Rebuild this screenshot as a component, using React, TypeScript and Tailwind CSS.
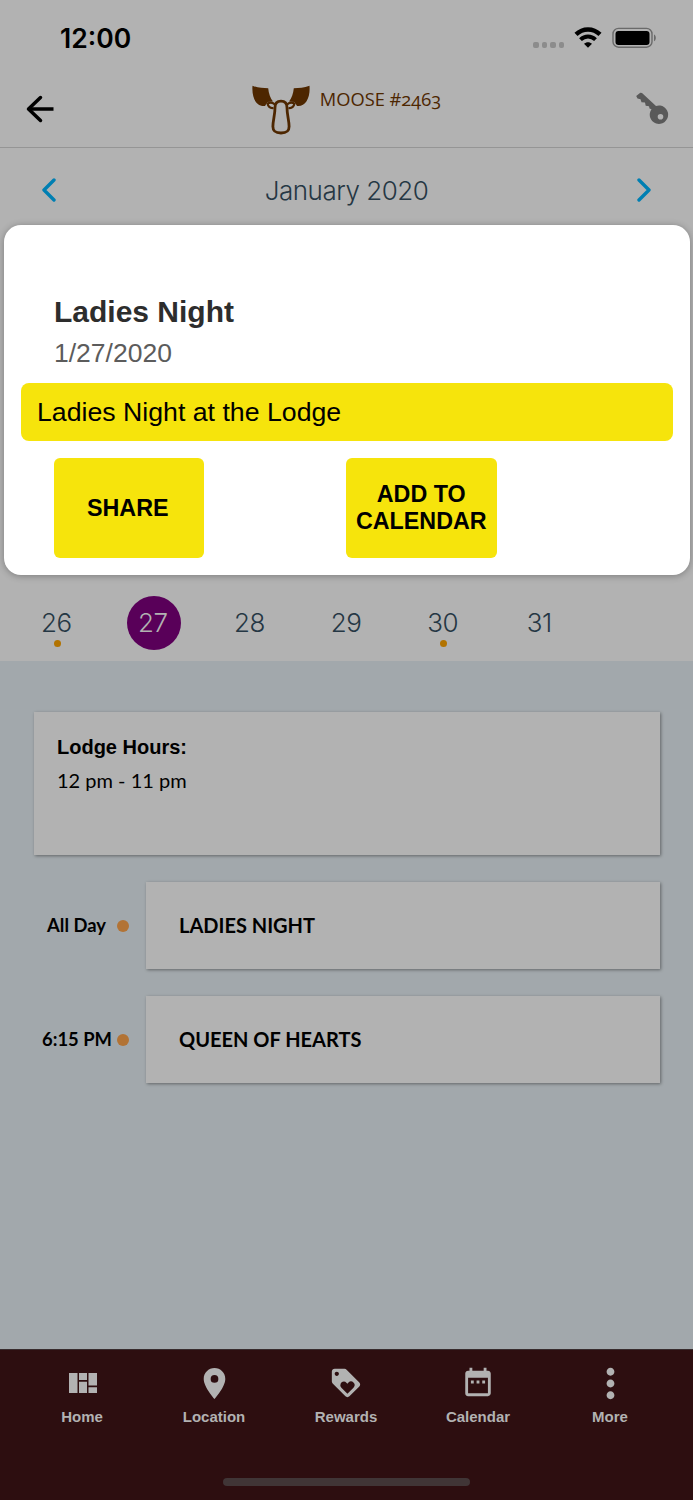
import React from 'react';
import { MdDateRange, MdLoyalty, MdMoreVert, MdPlace } from 'react-icons/md';

const days = [
  { day: 26, dot: true },
  { day: 27, selected: true },
  { day: 28 },
  { day: 29 },
  { day: 30, dot: true },
  { day: 31 },
];

const events = [
  { time: 'All Day', title: 'LADIES NIGHT', timeClass: 'pr-[6px]' },
  { time: '6:15 PM', title: 'QUEEN OF HEARTS', timeClass: '' },
];

const HomeIcon = () => (
  <svg width="28" height="20" viewBox="0 0 28 20" fill="currentColor">
    <path d="M0 0h8.5v20H0zM10 0h8v7h-8zM10 8.7h8V20h-8zM19.5 0H28v12.5h-8.5zM19.5 14.3H28V20h-8.5z" />
  </svg>
);

const tabs = [
  { label: 'Home', icon: <HomeIcon />, iconClass: 'pb-px pl-px' },
  { label: 'Location', icon: <MdPlace size={37} />, iconClass: '' },
  { label: 'Rewards', icon: <MdLoyalty size={34} />, iconClass: 'pb-px' },
  { label: 'Calendar', icon: <MdDateRange size={34} />, iconClass: 'pb-1' },
  { label: 'More', icon: <MdMoreVert size={47} />, iconClass: '' },
];

const StatusBar = () => (
  <div className="flex h-[76px] items-start justify-between pl-[60px] pr-[36px]">
    <span className="mt-[21px] font-['Inter',sans-serif] text-[26.500px] leading-[34px] font-semibold">
      12:00
    </span>
    <div className="mt-[27px] flex items-start">
      <div className="mt-[15px] flex gap-[3px]">
        {[0, 1, 2, 3].map((i) => (
          <span key={i} className="h-1.5 w-[5.5px] rounded-[2px] bg-[#8c8c8c]" />
        ))}
      </div>
      <svg className="ml-[10px]" width="28" height="22" viewBox="0 0 28 22" fill="none">
        <path d="M2 7.4C8.8.8 19.2.8 26 7.4" stroke="#000" strokeWidth="4.400" />
        <path d="M6.500 12.600c4.400-4.200 10.600-4.200 15 0" stroke="#000" strokeWidth="4" />
        <path d="M14 20.800l-4-4c2.200-2.200 5.800-2.200 8 0z" fill="#000" />
      </svg>
      <svg className="ml-[10px]" width="45" height="22" viewBox="0 0 45 22" fill="none">
        <rect x="1" y="1.400" width="39" height="18.800" rx="5.500" stroke="#6a6a6a" strokeWidth="1.400" />
        <rect x="3.500" y="4" width="34" height="14" rx="3" fill="#000" />
        <path d="M42 7.500c2.400 1 2.400 5.800 0 6.800z" fill="#6a6a6a" />
      </svg>
    </div>
  </div>
);

const MooseLogo = () => (
  <svg width="60" height="52" viewBox="0 0 60 52" fill="none">
    <path
      d="M1.500.800C7 3 12 3 17.200 3.200c.500 5.500 2 9.500 4.800 13.400l-5.500.400-2.500 4C5.500 22 .500 13 1.500.800zM58.500.800C53 3 48 3 42.800 3.200c-.500 5.500-2 9.500-4.800 13.400l5.500.400 2.500 4C54.500 22 59.500 13 58.500.800z"
      fill="#4d2600"
    />
    <path
      d="M22.500 23c-3.200.500-5.200-1.200-6-4.500 3.200-1.600 6-.800 7.500 1.200M37.500 23c3.200.500 5.200-1.200 6-4.500-3.200-1.600-6-.800-7.500 1.200"
      stroke="#4d2600"
      strokeWidth="2.200"
    />
    <path
      d="M30 16.200c-3.800 0-6 2.200-6 6.200 0 8-2.100 12.600-2.100 19.200 0 5 2.600 6.400 8.100 6.400s8.100-1.400 8.100-6.400c0-6.600-2.100-11.200-2.100-19.200 0-4-2.200-6.200-6-6.200z"
      stroke="#4d2600"
      strokeWidth="2.800"
    />
  </svg>
);

const Header = () => (
  <header className="flex h-[72px] items-start justify-between border-b border-[#959595] pl-[26px] pr-[23px]">
    <svg className="mt-[19px]" width="28" height="28" viewBox="0 0 28 28" fill="none" stroke="#000" strokeWidth="3.500">
      <path d="M14.500 2.500L2.500 14l12 11.500" strokeLinejoin="round" strokeLinecap="round" />
      <path d="M2.500 14H27.500" />
    </svg>
    <div className="mt-[9px] flex items-start pl-[2px]">
      <MooseLogo />
      <span className="mt-[2px] ml-[9px] font-['Open_Sans',sans-serif] text-[18.300px] leading-6 text-[#4d2600] oldstyle-nums">
        MOOSE #2463
      </span>
    </div>
    <svg className="mt-[16px]" width="34" height="34" viewBox="0 0 34 34" fill="#595959">
      <path
        fillRule="evenodd"
        d="M4.300.800L.200 4l1.300 2.500 3 .800 1 3 3.500.200.700 3.300 3.300.500.500 2.300 2 .700A9.200 9.200 0 1 0 20 14L6 1zM24.500 22a2.800 2.800 0 1 1 0 5.600 2.800 2.800 0 0 1 0-5.600z"
      />
    </svg>
  </header>
);

const Calendar = () => (
  <section className="flex h-[513px] flex-col justify-between font-['Inter',sans-serif] text-[#253744]">
    <div className="flex h-[84px] items-center justify-between pr-[41px] pl-[41px]">
      <svg width="15" height="24" viewBox="0 0 15 24" fill="none" stroke="#007fb2" strokeWidth="3.400">
        <path d="M13 2L3 12l10 10" strokeLinecap="round" strokeLinejoin="round" />
      </svg>
      <h1 className="pt-px text-[26px] font-light tracking-[-0.500px]">January 2020</h1>
      <svg width="15" height="24" viewBox="0 0 15 24" fill="none" stroke="#007fb2" strokeWidth="3.400">
        <path d="M2 2l10 10L2 22" strokeLinecap="round" strokeLinejoin="round" />
      </svg>
    </div>
    <div className="grid h-[65px] grid-cols-7 pr-[8px] pl-[9px] text-[26px] font-light tracking-[-0.500px]">
      {days.map(({ day, dot, selected }) => (
        <div key={day} className="flex flex-col items-center">
          <span
            className={`flex h-[54px] w-[54px] items-center justify-center rounded-full pr-[2px] pb-[2px] ${
              selected ? 'bg-[#590059] text-[#b2b2b2]' : ''
            }`}
          >
            {day}
          </span>
          {dot && <span className="-mt-[10px] h-[7px] w-[7px] rounded-full bg-[#b27300]" />}
        </div>
      ))}
    </div>
  </section>
);

const EventModal = () => (
  <div className="absolute top-[225px] left-[3.500px] h-[349.500px] w-[686px] rounded-[17px] bg-white px-[17px] pt-[70px] font-['Liberation_Sans',sans-serif] shadow-[0_1px_7px_rgba(0,0,0,0.3)]">
    <h2 className="pl-[33.500px] text-[30px] leading-[34px] font-bold text-[#2d2d2d]">Ladies Night</h2>
    <p className="mt-[8px] pl-[33.500px] text-[26.500px] leading-8 text-[#5c5c5c]">1/27/2020</p>
    <p className="mt-[14px] h-[58px] rounded-lg bg-[#f6e40c] pl-[16.500px] text-[26.700px] leading-[58px]">
      Ladies Night at the Lodge
    </p>
    <div className="mt-[17px] flex gap-[142px] pl-[33px] text-[23.300px] leading-[27px] font-bold">
      <button type="button" className="h-[100px] w-[150.500px] rounded-md bg-[#f6e40c] pr-[2px]">
        SHARE
      </button>
      <button type="button" className="h-[100px] w-[150.500px] rounded-md bg-[#f6e40c]">
        ADD TO
        <br />
        CALENDAR
      </button>
    </div>
  </div>
);

const Agenda = () => (
  <main className="flex h-[688px] flex-col gap-[27px] bg-[#a2a8ac] pt-[51px] pr-[33.500px] pl-[34px] font-['Lato',sans-serif] text-[20px]">
    <div className="h-[143px] bg-[#b2b2b2] px-[23px] pt-[22px] shadow-[1px_1px_3px_rgba(0,0,0,0.4)]">
      <h3 className="font-['Liberation_Sans',sans-serif] leading-[26px] font-bold">Lodge Hours:</h3>
      <p className="mt-[7px] leading-[26px]">12 pm - 11 pm</p>
    </div>
    {events.map(({ time, title, timeClass }) => (
      <div key={title} className="flex h-[87px] items-center">
        <span className={`w-[78px] pt-px text-right text-[18.400px] whitespace-nowrap font-bold ${timeClass}`}>
          {time}
        </span>
        <span className="ml-[5px] h-3 w-3 rounded-full bg-[#b27335]" />
        <div className="ml-[16.500px] flex h-full flex-1 items-center bg-[#b2b2b2] pb-[2px] pl-[33.500px] font-bold shadow-[1px_1px_3px_rgba(0,0,0,0.4)]">
          {title}
        </div>
      </div>
    ))}
  </main>
);

const TabBar = () => (
  <footer className="flex h-[151px] flex-col items-center justify-between border-t border-[#382c2e] bg-[#2d0e10] pb-[14px] font-['Liberation_Sans',sans-serif] text-[#b2b2b2]">
    <nav className="mr-px grid w-[660px] grid-cols-5 pt-[10px]">
      {tabs.map(({ label, icon, iconClass }) => (
        <a key={label} className="flex flex-col items-center text-[15px] leading-5 font-bold">
          <span className={`flex h-[47px] items-center ${iconClass}`}>{icon}</span>
          {label}
        </a>
      ))}
    </nav>
    <div className="h-2 w-[247px] rounded-full bg-[#403536]" />
  </footer>
);

const App = () => (
  <div className="relative h-[1500px] w-[693px] overflow-hidden bg-[#b2b2b2] text-black">
    <StatusBar />
    <Header />
    <Calendar />
    <Agenda />
    <TabBar />
    <EventModal />
  </div>
);

export default App;
